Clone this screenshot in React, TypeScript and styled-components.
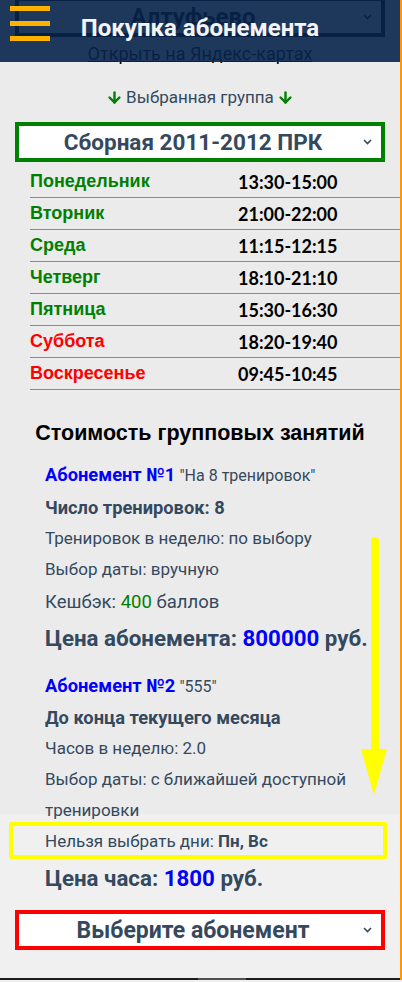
import styled, { createGlobalStyle } from "styled-components";
import { ArrowDown } from "lucide-react";

const GlobalStyle = createGlobalStyle`
  html, body {
    margin: 0;
    padding: 0;
    background: #f0f0f0;
  }
  body {
    font-family: Roboto, "Noto Sans", sans-serif;
    color: #34495e;
  }
`;

type Day = { name: string; time: string; weekend?: boolean };

const SCHEDULE: Day[] = [
  { name: "Понедельник", time: "13:30-15:00" },
  { name: "Вторник", time: "21:00-22:00" },
  { name: "Среда", time: "11:15-12:15" },
  { name: "Четверг", time: "18:10-21:10" },
  { name: "Пятница", time: "15:30-16:30" },
  { name: "Суббота", time: "18:20-19:40", weekend: true },
  { name: "Воскресенье", time: "09:45-10:45", weekend: true },
];

const Page = styled.div`
  position: relative;
  width: 400px;
  min-height: 980px;
  border-right: 2px solid #ff9800;
  display: flex;
  flex-direction: column;
  overflow: hidden;
`;

const Header = styled.header`
  position: absolute;
  top: 0;
  left: 0;
  right: 0;
  height: 62px;
  background: rgba(8, 37, 77, 0.9);
  display: flex;
  align-items: center;
  justify-content: center;
  z-index: 5;
`;

const Burger = styled.button`
  position: absolute;
  left: 10px;
  top: 6px;
  width: 40px;
  height: 35px;
  padding: 0;
  border: none;
  background: none;
  display: flex;
  flex-direction: column;
  justify-content: space-between;
`;

const BurgerBar = styled.span`
  display: block;
  height: 5px;
  background: #ffb300;
`;

const Title = styled.h1`
  margin: 0 0 7px;
  font-family: Roboto, sans-serif;
  font-size: 24px;
  font-weight: 700;
  color: #f4f4f4;
`;

const Panel = styled.div`
  background: #ebebeb;
`;

const Select = styled.div<{
  $border: string;
  $size?: number;
  $offset?: number;
  $bg?: string;
  $color?: string;
}>`
  position: relative;
  margin: ${({ $offset }) => $offset ?? 0}px 15px 0;
  padding-right: 14px;
  height: 40px;
  box-sizing: border-box;
  border: 4px solid ${({ $border }) => $border};
  background: ${({ $bg }) => $bg ?? "#fff"};
  display: flex;
  align-items: center;
  justify-content: center;
  font-family: Roboto, sans-serif;
  font-weight: 700;
  font-size: ${({ $size }) => $size ?? 22.5}px;
  color: ${({ $color }) => $color ?? "#34495e"};
`;

const Chevron = styled.svg`
  position: absolute;
  right: 9px;
  top: 50%;
  margin-top: -3px;
`;

const MapLink = styled.a`
  display: block;
  margin-top: 5px;
  text-align: center;
  font-size: 18px;
  line-height: 24px;
  color: #000;
  text-decoration: underline;
`;

const GroupCaption = styled.div`
  margin: 19px 0 13px;
  display: flex;
  align-items: center;
  justify-content: center;
  gap: 3px;
  font-size: 17px;
  line-height: 24px;
`;

const Schedule = styled.div`
  margin: 4px 0 0 30px;
`;

const Row = styled.div`
  display: grid;
  grid-template-columns: 208px 1fr;
  align-items: center;
  height: 31px;
  border-bottom: 1px solid #8a8a8a;
`;

const DayName = styled.span<{ $weekend?: boolean }>`
  font-family: "Liberation Sans", Arial, sans-serif;
  font-weight: 700;
  font-size: 18px;
  color: ${({ $weekend }) => ($weekend ? "#ff0000" : "#008000")};
`;

const DayTime = styled.span`
  font-family: Lato, sans-serif;
  font-weight: 700;
  font-size: 18px;
  color: #000;
`;

const PriceHeading = styled.h2`
  margin: 31px 0 12px;
  text-align: center;
  font-family: "Liberation Sans", Arial, sans-serif;
  font-size: 21.5px;
  font-weight: 700;
  color: #000;
`;

const Plans = styled.div`
  padding-left: 45px;
  margin-bottom: -11px;
`;

const Line = styled.div<{ $size?: number; $bold?: boolean; $height?: number }>`
  font-size: ${({ $size, $bold }) => $size ?? ($bold ? 18.3 : 17)}px;
  font-weight: ${({ $bold }) => ($bold ? 700 : 400)};
  line-height: ${({ $height }) => $height ?? 31}px;
`;

const PlanName = styled.b`
  font-size: 18.3px;
  color: #0000ff;
`;

const Quote = styled.span`
  font-size: 16px;
`;

const Accent = styled.span<{ $color: string; $bold?: boolean }>`
  color: ${({ $color }) => $color};
  font-weight: ${({ $bold }) => ($bold ? 700 : "inherit")};
`;

const Price = styled.div`
  font-size: 22.3px;
  font-weight: 700;
  line-height: 36px;
`;

const PlanGap = styled.div`
  height: 14px;
`;

const Rest = styled.div`
  display: flex;
  flex-direction: column;
  flex: 1;
`;

const Highlight = styled.div`
  margin: 8px 13px 0 9px;
  padding-left: 32px;
  height: 37px;
  box-sizing: border-box;
  border: 4px solid #ffff00;
  border-radius: 2px;
  display: flex;
  align-items: center;
  font-size: 17px;
`;

const BottomPrice = styled(Price)`
  padding-left: 45px;
  margin-top: 1px;
`;

const PlanSelectWrap = styled.div`
  margin-top: 14px;
`;

const ScrollTrack = styled.div`
  margin-top: auto;
  height: 2px;
  background: #1c1c1c;
  display: flex;
`;

const ScrollThumb = styled.div`
  margin-left: 198px;
  width: 48px;
  background: #505050;
`;

const Pointer = styled.svg`
  position: absolute;
  left: 360px;
  top: 537px;
  z-index: 3;
`;

const SelectChevron = ({ color = "#34495e" }: { color?: string }) => (
  <Chevron width="9" height="6" viewBox="0 0 9 6">
    <path d="M1 1l3.5 3.5L8 1" fill="none" stroke={color} strokeWidth="1.6" />
  </Chevron>
);

export default function App() {
  return (
    <>
      <GlobalStyle />
      <Page>
        <Header>
          <Burger aria-label="menu">
            <BurgerBar />
            <BurgerBar />
            <BurgerBar />
          </Burger>
          <Title>Покупка абонемента</Title>
        </Header>

        <Panel>
          <Select $border="#000" $bg="transparent" $color="#000" $size={24} $offset={-3}>
            Алтуфьево
            <SelectChevron color="#000" />
          </Select>
          <MapLink href="#">Открыть на Яндекс-картах</MapLink>

          <GroupCaption>
            <ArrowDown size={17} strokeWidth={3.4} color="#008000" />
            Выбранная группа
            <ArrowDown size={17} strokeWidth={3.4} color="#008000" />
          </GroupCaption>

          <Select $border="#008000">
            Сборная 2011-2012 ПРК
            <SelectChevron />
          </Select>

          <Schedule>
            {SCHEDULE.map((d) => (
              <Row key={d.name}>
                <DayName $weekend={d.weekend}>{d.name}</DayName>
                <DayTime>{d.time}</DayTime>
              </Row>
            ))}
          </Schedule>

          <PriceHeading>Стоимость групповых занятий</PriceHeading>

          <Plans>
            <Line $height={33}>
              <PlanName>Абонемент №1</PlanName> <Quote>"На 8 тренировок"</Quote>
            </Line>
            <Line $bold>Число тренировок: 8</Line>
            <Line>Тренировок в неделю: по выбору</Line>
            <Line>Выбор даты: вручную</Line>
            <Line $size={18.5} $height={35}>
              Кешбэк: <Accent $color="#008000">400</Accent> баллов
            </Line>
            <Price>
              Цена абонемента: <Accent $color="#0000ff">800000</Accent> руб.
            </Price>
            <PlanGap />
            <Line>
              <PlanName>Абонемент №2</PlanName> <Quote>"555"</Quote>
            </Line>
            <Line $bold>До конца текущего месяца</Line>
            <Line>Часов в неделю: 2.0</Line>
            <Line $height={30.5}>
              Выбор даты: с ближайшей доступной
              <br />
              тренировки
            </Line>
          </Plans>
        </Panel>

        <Rest>
          <Highlight>
            Нельзя выбрать дни:&nbsp;<Accent $color="#34495e" $bold>Пн, Вс</Accent>
          </Highlight>
          <BottomPrice>
            Цена часа: <Accent $color="#0000ff">1800</Accent> руб.
          </BottomPrice>
          <PlanSelectWrap>
            <Select $border="#ff0000" $size={23}>
              Выберите абонемент
              <SelectChevron />
            </Select>
          </PlanSelectWrap>
          <ScrollTrack>
            <ScrollThumb />
          </ScrollTrack>
        </Rest>

        <Pointer width="28" height="260" viewBox="0 0 28 260">
          <rect x="11" y="0" width="8" height="220" rx="4" fill="#ffff00" />
          <path d="M1 212h26L14 258z" fill="#ffff00" />
        </Pointer>
      </Page>
    </>
  );
}
